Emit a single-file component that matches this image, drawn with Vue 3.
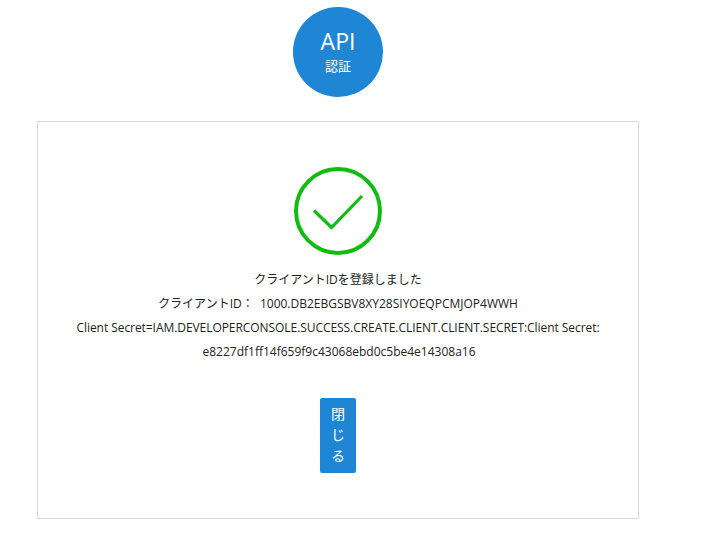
<script setup>
// Résultat de l'enregistrement du client
const clientId = '1000.DB2EBGSBV8XY28SIYOEQPCMJOP4WWH'
const secretLabel = 'Client Secret=IAM.DEVELOPERCONSOLE.SUCCESS.CREATE.CLIENT.CLIENT.SECRET:Client Secret:'
const secret = 'e8227df1ff14f659f9c43068ebd0c5be4e14308a16'
</script>

<template>
  <div class="page">
    <!-- Badge du haut -->
    <div class="badge">
      <span class="badge-title">API</span>
      <span class="badge-sub">認証</span>
    </div>

    <div class="card">
      <svg class="check" width="90" height="90" viewBox="0 0 90 90">
        <circle cx="45" cy="45" r="42" fill="none" stroke="#12bb12" stroke-width="4" />
        <path d="M21 44.5 L38.5 61.5 L69 30" fill="none" stroke="#12bb12" stroke-width="3.2" />
      </svg>

      <p class="line">クライアントIDを登録しました</p>
      <p class="line">クライアントID： &nbsp;{{ clientId }}</p>
      <p class="line line-tight">{{ secretLabel }}</p>
      <p class="line line-secret">{{ secret }}</p>

      <button class="close-btn">閉じる</button>
    </div>
  </div>
</template>

<style scoped>
.page {
  width: 602px;
  margin-left: 37px;
  padding-top: 7px;
  font-family: "Open Sans", "Noto Sans CJK JP", sans-serif;
}

.badge {
  width: 90px;
  height: 90px;
  margin: 0 auto 24px;
  border-radius: 50%;
  background: #1f86d6;
  color: #fff;
  display: flex;
  flex-direction: column;
  align-items: center;
  justify-content: center;
}

.badge-title {
  font-size: 23px;
  line-height: 28px;
  margin-top: -1px;
}

.badge-sub {
  font-size: 13px;
  line-height: 20px;
  margin-top: 1px;
}

.card {
  box-sizing: border-box;
  height: 398px;
  border: 1px solid #d9d9d9;
  padding-top: 44px;
  display: flex;
  flex-direction: column;
  align-items: center;
}

.check {
  display: block;
  margin-bottom: 12px;
}

.line {
  margin: 0;
  font-size: 12px;
  line-height: 24px;
  color: #222;
  white-space: nowrap;
}

.line-tight {
  letter-spacing: -0.06px;
}

.line-secret {
  padding-left: 2px;
}

.close-btn {
  width: 36px;
  height: 75px;
  margin-top: 34px;
  padding: 5px 8px 7px;
  border: none;
  border-radius: 2px;
  background: #1f86d6;
  color: #fff;
  font-family: inherit;
  font-size: 14px;
  line-height: 21px;
  cursor: pointer;
}
</style>
